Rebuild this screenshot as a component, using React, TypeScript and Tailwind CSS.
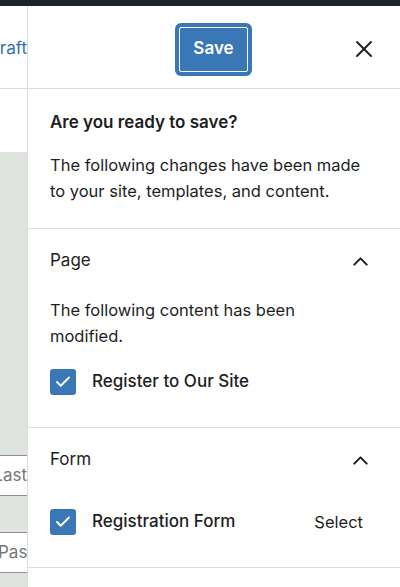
import { X, ChevronUp, Check } from 'lucide-react';

const font = { fontFamily: 'Inter, "Noto Sans", sans-serif' };

function Checked() {
    return (
        <span className="flex h-[26px] w-[26px] shrink-0 items-center justify-center rounded-[3px] bg-[#3a77b6]">
            <Check className="h-[18px] w-[18px] text-white" strokeWidth={2.5} />
        </span>
    );
}

function SectionHead({ title }: { title: string }) {
    return (
        <div className="flex h-[64px] items-center justify-between pl-[22px] pr-[27px]">
            <span className="text-[17px]">{title}</span>
            <ChevronUp className="h-[25px] w-[25px]" strokeWidth={1.9} />
        </div>
    );
}

export default function App() {
    return (
        <div className="flex h-[587px] w-[400px] flex-col overflow-hidden bg-white text-[#1e1e1e]" style={font}>
            <div className="h-[6px] shrink-0 bg-[#1d2327]" />
            <div className="flex flex-1">
                {/* editor canvas, mostly hidden */}
                <div className="flex w-[28px] shrink-0 flex-col overflow-hidden border-r border-[#dcdcdc]">
                    <div className="flex h-[83px] shrink-0 items-center justify-end border-b border-[#dcdcdc] pt-[4px]">
                        <span className="whitespace-nowrap text-[17px] text-[#2f6fb3]">Save draft</span>
                    </div>
                    <div className="h-[63px] shrink-0" />
                    <div className="flex flex-1 flex-col bg-[#dfe4de] pt-[303px]">
                        <div className="flex h-[41px] items-center justify-end border-y border-[#8c8f94] bg-white">
                            <span className="whitespace-nowrap text-[17px] text-[#757575]">First Last</span>
                        </div>
                        <div className="h-[36px]" />
                        <div className="flex h-[41px] items-center border-y border-[#8c8f94] bg-white">
                            <span className="-ml-[2px] whitespace-nowrap text-[17px] text-[#757575]">Password</span>
                        </div>
                    </div>
                </div>

                {/* save panel */}
                <div className="flex flex-1 flex-col">
                    <div className="flex h-[83px] shrink-0 items-center border-b border-[#dcdcdc] pl-[149px] pr-[22px] pt-[4px]">
                        <button className="flex h-[49px] w-[73px] items-center justify-center rounded-[4px] bg-[#3a77b6] text-[17px] font-semibold text-white ring-2 ring-[#3a77b6] outline outline-[1.5px] -outline-offset-[3px] outline-white">
                            Save
                        </button>
                        <X className="ml-auto h-[28px] w-[28px]" strokeWidth={1.6} />
                    </div>

                    <div className="border-b border-[#dcdcdc] px-[22px] pb-[24px] pt-[20px]">
                        <h2 className="text-[17px] font-semibold leading-[26px]">Are you ready to save?</h2>
                        <p className="mt-[17px] text-[16.5px] leading-[26px]">
                            The following changes have been made to your site, templates, and content.
                        </p>
                    </div>

                    <div className="border-b border-[#dcdcdc]">
                        <SectionHead title="Page" />
                        <p className="mt-[4px] max-w-[300px] pl-[22px] text-[16.5px] leading-[26px]">
                            The following content has been modified.
                        </p>
                        <div className="flex items-center gap-[16px] px-[22px] pb-[32px] pt-[20px]">
                            <Checked />
                            <span className="text-[17px] font-medium">Register to Our Site</span>
                        </div>
                    </div>

                    <div className="border-b border-[#dcdcdc]">
                        <SectionHead title="Form" />
                        <div className="flex items-center gap-[16px] pb-[32px] pl-[22px] pr-[37px] pt-[17px]">
                            <Checked />
                            <span className="text-[17px] font-medium">Registration Form</span>
                            <span className="ml-auto text-[16.5px]">Select</span>
                        </div>
                    </div>
                </div>
            </div>
        </div>
    );
}
